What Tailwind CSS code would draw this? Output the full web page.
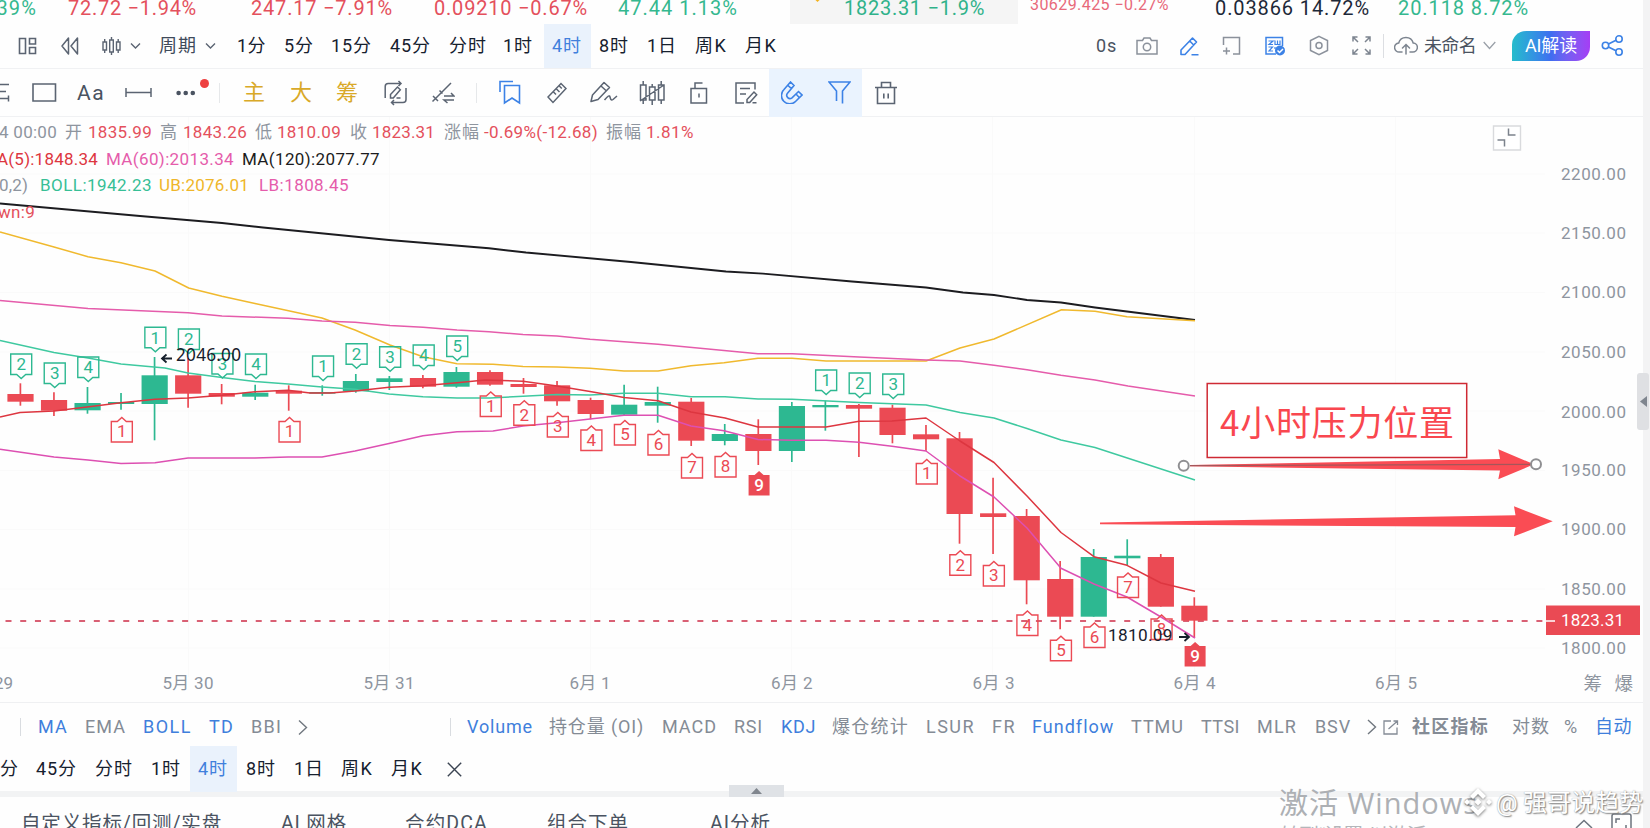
<!DOCTYPE html>
<html lang="zh-CN">
<head>
<meta charset="utf-8">
<title>4时 K线图</title>
<script src="https://cdn.jsdelivr.net/npm/@tailwindcss/browser@4"></script>
</head>
<body class="bg-white overflow-hidden">
<div class="relative flex w-[1650px] h-[828px] overflow-hidden bg-[#fefefe] font-['Roboto','Noto_Sans_CJK_SC',sans-serif] whitespace-nowrap">
<main class="flex w-[1643px] shrink-0 flex-col">

  <!-- ticker strip -->
  <div class="flex h-6 shrink-0 items-start text-[20px] leading-[17px] text-[#e4505c] [&>*]:shrink-0">
    <span class="-ml-2.5 w-[78px] text-[#35b88f]" data-w="47">.39%</span>
    <span class="w-[183px]" data-w="129">72.72 −1.94%</span>
    <span class="w-[183px]" data-w="142">247.17 −7.91%</span>
    <span class="w-[184px]" data-w="154">0.09210 −0.67%</span>
    <span class="w-[172px] text-[#35b88f]" data-w="120">47.44 1.13%</span>
    <div class="h-6 w-[228px] bg-[#f5f5f5] pl-[54px] text-[#2fb28a] relative"><i class="absolute left-[25px] -top-1 size-[5px] rotate-45 bg-[#f3b21c]"></i><span data-w="141">1823.31 −1.9%</span></div>
    <span class="ml-3 w-[185px] text-[16px] leading-[9px] text-[#e8697a]" data-w="139">30629.425 −0.27%</span>
    <span class="w-[183px] text-[#1d2838]" data-w="155">0.03866 14.72%</span>
    <span class="text-[#35b88f]" data-w="131">20.118 8.72%</span>
  </div>

  <!-- period toolbar -->
  <div class="flex h-[45px] shrink-0 items-center border-b border-[#f0f1f3] pb-px pl-[18px] text-[18px] leading-6 text-[#16202e] [&>*]:shrink-0">
    <div class="w-[43px]"><svg class="w-[19px] h-[18px]" viewBox="0 0 19 18" fill="none" stroke="#5b6472" stroke-width="1.6"><path d="M1.5 1.5h6v15h-6zM11.500 1.500h6v5.500h-6zM11.500 10.500h6v6h-6z"/></svg></div>
    <div class="w-[41px]"><svg class="w-[18px] h-5" viewBox="0 0 18 20" fill="none" stroke="#5b6472" stroke-width="1.5" stroke-linejoin="round"><path d="M7.500 2v16L1 10zM16.500 2v16L10 10z"/></svg></div>
    <div class="w-7"><svg class="w-[19px] h-5" viewBox="0 0 19 20" fill="none" stroke="#5b6472" stroke-width="1.4"><path d="M1 6h3.500v8H1zM7.700 4h3.600v12H7.700zM14.500 6H18v8h-3.500zM2.700 3v3m0 8v3M9.500 1v3m0 12v3M16.200 3v3m0 8v3"/></svg></div>
    <div class="w-[29px]"><svg class="w-[11px] h-2" viewBox="0 0 11 8" fill="none" stroke="#5b6472" stroke-width="1.4"><path d="M1 1.500 5.500 6 10 1.500"/></svg></div>
    <span class="w-[46px] text-[#3f4a5a]" data-w="38">周期</span>
    <div class="w-8"><svg class="w-[11px] h-2" viewBox="0 0 11 8" fill="none" stroke="#5b6472" stroke-width="1.4"><path d="M1 1.500 5.500 6 10 1.500"/></svg></div>
    <span class="w-[47px]" data-w="29">1分</span>
    <span class="w-[47px]" data-w="30">5分</span>
    <span class="w-[59px]" data-w="41">15分</span>
    <span class="w-[59px]" data-w="41">45分</span>
    <span class="w-[54px]" data-w="38">分时</span>
    <span class="w-[41px]" data-w="30">1时</span>
    <div class="flex h-[44px] w-[47px] items-center bg-[#eaf2fc] pl-2 text-[#4080dc]"><span data-w="30">4时</span></div>
    <span class="ml-2 w-12" data-w="30">8时</span>
    <span class="w-12" data-w="30">1日</span>
    <span class="w-[50px]" data-w="33">周K</span>
    <span class="w-[351px]" data-w="33">月K</span>
    <span class="w-10 text-[#4a5361]" data-w="21">0s</span>
    <div class="w-11"><svg class="w-[22px] h-[18px]" viewBox="0 0 22 18" fill="none" stroke="#8b919b" stroke-width="1.5"><path d="M1 3.500h5.500L8 1h6l1.500 2.500H21V17H1z"/><circle cx="11" cy="10" r="3.700"/></svg></div>
    <div class="w-[42px]"><svg class="w-[19px] h-5" viewBox="0 0 19 20" fill="none" stroke="#3c82e6" stroke-width="1.600" stroke-linejoin="round"><path d="M1 18.500v-4.500L12.500 2l4 4L5 18.500zM9.700 5l4 4M11.500 18.700H18.500"/></svg></div>
    <div class="w-[43px]"><svg class="w-[19px] h-5" viewBox="0 0 19 20" fill="none" stroke="#8b919b" stroke-width="1.500"><path d="M1.500 9V1.500h16v16.500H11M4.500 11.500v7M1 15h7"/></svg></div>
    <div class="w-11"><svg class="w-[21px] h-5" viewBox="0 0 21 20" fill="none" stroke="#3c82e6" stroke-width="1.500"><path d="M11 18H1V1.500h16.500V10"/><path d="M3.500 5h4.500L4 8.500h4M10 4.500v4h5v-4m-2.500 0v4M3.500 11h4L4 15h4M10 11v2" stroke-width="1.200"/><circle cx="15" cy="14.500" r="5" fill="#3c82e6" stroke="none"/><path d="m12.500 14.500 2 2 3.500-3.500" stroke="#fff"/></svg></div>
    <div class="w-[43px]"><svg class="w-[20px] h-[21px]" viewBox="0 0 20 21" fill="none" stroke="#8b919b" stroke-width="1.500"><path d="M10 1.300 18.500 5.500v10L10 19.700 1.500 15.500v-10z"/><circle cx="10" cy="10.500" r="3"/></svg></div>
    <div class="w-[31px]"><svg class="w-[19px] h-[19px]" viewBox="0 0 19 19" fill="none" stroke="#7d8590" stroke-width="1.500"><path d="M1 5.500V1h4.500M1 1l5 5M13.500 1H18v4.500M18 1l-5 5M1 13.500V18h4.500M1 18l5-5M13.500 18H18v-4.500M18 18l-5-5"/></svg></div>
    <div class="h-6 w-px bg-[#dcdee2]"></div>
    <div class="ml-2.5 w-[30px]"><svg class="w-6 h-[19px]" viewBox="0 0 24 19" fill="none" stroke="#7d8590" stroke-width="1.500" stroke-linecap="round"><path d="M8 16H5.500a4.500 4.500 0 0 1-.8-9 7.500 7.500 0 0 1 14.500 0 4.500 4.500 0 0 1-.7 9H16M12 18V9M8.500 12 12 8.500l3.500 3.500"/></svg></div>
    <span class="w-[59px] text-[#4a5361]" data-w="52">未命名</span>
    <div class="w-[29px]"><svg class="w-[13px] h-[9px]" viewBox="0 0 13 9" fill="none" stroke="#9aa0a8" stroke-width="1.300"><path d="M.7 1 6.500 7.500 12.300 1"/></svg></div>
    <div class="flex h-[30px] w-[78px] items-center justify-center rounded-tl-[14px] rounded-br-[14px] bg-linear-to-r from-[#25bccb] via-[#3f6df0] to-[#a53df5] text-white"><span data-w="52">AI解读</span></div>
    <svg class="ml-[11px] w-[23px] h-[21px]" viewBox="0 0 23 21" fill="none" stroke="#3c82e6" stroke-width="1.600"><circle cx="4.500" cy="10.500" r="3.200"/><circle cx="18" cy="4" r="3.200"/><circle cx="18" cy="17" r="3.200"/><path d="m7.500 9 7.500-3.700M7.500 12l7.500 3.700"/></svg>
  </div>

  <!-- drawing toolbar -->
  <div class="flex h-12 shrink-0 items-center border-b border-[#f0f1f3] text-[21px] leading-6 text-[#d9a928] [&>*]:shrink-0">
    <div class="w-8"><svg class="w-[10px] h-[19px]" viewBox="0 0 10 19" fill="none" stroke="#5b6472" stroke-width="1.500"><path d="M0 1.500h9M0 8.500h6M0 15.500h9M8.500 12.500v6"/></svg></div>
    <div class="w-[45px]"><svg class="w-[25px] h-[19px]" viewBox="0 0 25 19" fill="none" stroke="#5b6472" stroke-width="1.600"><path d="M1 1h22.500v17H1z"/></svg></div>
    <span class="w-12 text-[#4a5361]" data-w="28">Aa</span>
    <div class="w-[51px]"><svg class="w-[27px] h-[10px]" viewBox="0 0 27 10" fill="none" stroke="#5b6472" stroke-width="1.500"><path d="M1 0v9M26 0v9M1 4.500h25"/></svg></div>
    <div class="relative w-[43px]"><svg class="w-5 h-[6px]" viewBox="0 0 20 6" fill="#4a5361"><circle cx="2.600" cy="3" r="2.300"/><circle cx="9.700" cy="3" r="2.300"/><circle cx="16.800" cy="3" r="2.300"/></svg><i class="absolute -top-[11px] left-6 size-[9px] rounded-full bg-[#ee4040]"></i></div>
    <div class="w-6"><div class="h-5 w-px bg-[#e6e8ea]"></div></div>
    <span class="w-[47px] text-[22px]" data-w="23">主</span>
    <span class="w-[46px] text-[22px]" data-w="22">大</span>
    <span class="w-[48px] text-[22px]" data-w="23">筹</span>
    <div class="w-[47px]"><svg class="w-[23px] h-[26px]" viewBox="0 0 23 26" fill="none" stroke="#5b6472" stroke-width="1.500"><path d="M1.200 18V6.500a3 3 0 0 1 3-3H17M14.500 1l2.500 2.500L14.500 6M22 8v11.500a3 3 0 0 1-3 3H7.500M10 20l-2.500 2.500L10 25"/><path d="M6.500 18v-3.500l7-7.500 2.800 2.700L9.300 18zM12.500 18h4"/></svg></div>
    <div class="w-[45px]"><svg class="w-6 h-[22px]" viewBox="0 0 24 22" fill="none" stroke="#5b6472" stroke-width="1.500"><path d="M1.500 19.500 20 1M2 14l5 5M13 14h10l-3-3M23 18H13l3.500 3M8.500 8.500l3 3"/></svg></div>
    <div class="w-[23px]"><div class="h-5 w-px bg-[#e6e8ea]"></div></div>
    <div class="w-12"><svg class="w-[22px] h-[25px]" viewBox="0 0 22 25" fill="none" stroke="#3c82e6" stroke-width="1.600"><path d="M1 12V1.500h13M5.500 5.500H20.500V23L13 18l-7.500 5z"/></svg></div>
    <div class="w-[43px]"><svg class="w-5 h-[22px]" viewBox="0 0 20 22" fill="none" stroke="#5b6472" stroke-width="1.500"><path d="M1 15 14 1.500l5 5L6 20.500zM6.500 10l2.500 2.500M9.500 7l3 3M12.300 4l2.500 2.500"/></svg></div>
    <div class="w-[49px]"><svg class="w-7 h-[23px]" viewBox="0 0 28 23" fill="none" stroke="#5b6472" stroke-width="1.500" stroke-linejoin="round"><path d="M1 20.500 2.500 14 14 1.500l5.500 5L8 18.500zM11 5l5.500 5M14.500 19c3.500-4.500 5-5 5.500-3s1 4 3 2.500L27 15"/></svg></div>
    <div class="w-[51px]"><svg class="w-[26px] h-6" viewBox="0 0 26 24" fill="none" stroke="#5b6472" stroke-width="1.500"><path d="M1.500 4H7v15H1.500zM10.500 6H16v13h-5.500zM19.500 4H25v15h-5.500zM4.200 0v4m0 15v4M13.200 3v3m0 13v5M22.200 0v4m0 15v4M1 20 25 4"/></svg></div>
    <div class="w-[45px]"><svg class="w-[18px] h-[22px]" viewBox="0 0 18 22" fill="none" stroke="#5b6472" stroke-width="1.500"><path d="M1 6.500h15.500V21H1zM5 6V1h7.500M9 11.500v4"/></svg></div>
    <div class="w-[34px]"><svg class="w-[23px] h-[22px]" viewBox="0 0 23 22" fill="none" stroke="#5b6472" stroke-width="1.500"><path d="M20 7.500V1H1v20h8M5 6.500h10M5 12h6M12 20.500v-3L19 10l2.700 2.700L14.700 20.500zM17.500 20.700h4"/></svg></div>
    <div class="flex h-12 w-[93px] items-center gap-[25px] bg-[#eaf3fe] pl-3">
      <svg class="w-[22px] h-[23px]" viewBox="0 0 22 23" fill="none" stroke="#3c82e6" stroke-width="1.600"><path d="M9.500 1 3 8.500a8 8 0 0 0 11.500 12L21 14l-3.500-3.500-6.500 6.300a3.200 3.200 0 0 1-4.500-4.500L13 4.500zM7 4.500l3.500 3.200M15 13l3.200 3.500"/></svg>
      <svg class="w-[23px] h-[23px]" viewBox="0 0 23 23" fill="none" stroke="#3c82e6" stroke-width="1.600"><path d="M8.500 20V10L1 1h21l-7.500 9v12.500"/></svg>
    </div>
    <svg class="ml-3 w-6 h-6" viewBox="0 0 24 24" fill="none" stroke="#5b6472" stroke-width="1.600"><path d="M1 6.500h22M7.500 6V1.500h9V6M3.500 7v15.500h17V7M9.800 12.500v5M14.200 12.500v5"/></svg>
  </div>

  <!-- chart -->
  <section class="relative h-[586px] w-[1643px] shrink-0 border-b border-[#eff0f2]">
    <svg id="chart" class="absolute inset-0 font-['Roboto','Noto_Sans_CJK_SC',sans-serif]" width="1643" height="586" viewBox="0 117 1643 586" fill="none">
      <g stroke="#fafafa"><path d="M188.500 117v560M389.500 117v560M590.500 117v560M791.500 117v560M992.500 117v560M1194.500 117v560M1395.500 117v560M0 174h1545M0 233h1545M0 292.500h1545M0 352h1545M0 411h1545M0 470.500h1545M0 529.500h1545M0 589h1545M0 648h1545"/></g>
      <path d="M5.500 621H1546" stroke="#d96074" stroke-width="1.800" stroke-dasharray="6 8.720"/>
      <g id="candles"></g>
      <g stroke-width="1.500" stroke-linejoin="round">
        <polyline stroke="#1c1c20" stroke-width="1.900" points="0,203.500 140,216 222,223 263,227.500 389,240 489,248.300 526,252.500 631,262 726,271.500 763,273.600 852,281.500 926,287.500 963,292.500 994,295 1027,300 1061,302.500 1095,307.500 1195,320"/>
        <polyline stroke="#f0b92e" points="0,232 54,247 88,256.700 121,262.700 155,271 188.700,288 222,296.300 255,303.500 322,318 355,330 390,345 423,356.700 457,363.700 493,364.200 523,366.500 557,367 590,368.300 624,371 658,371 691,365.700 724,362.700 758,358.300 792,358.300 826,361 926,361 960,348 994,339 1061.500,309.700 1095,311.300 1127,316.700 1195,320.700"/>
        <polyline stroke="#e55cab" points="0,300.500 88,308.500 188,312.700 222,316 288,318.300 322,321 355,322.300 390,325.500 423,327.300 457,330 489,331.700 523,334.500 557,336 590,339.300 658,344.300 724,350.500 758,353.700 792,353.700 859,357 926,360 960,361 994,365.300 1027,369.700 1061,375.300 1095,380 1128,386 1195,396"/>
        <polyline stroke="#3fc9a0" points="0,340.500 54,352.500 88,358 121,364 165,368 188,373 222,377.500 255,381.500 288,384 322,387 355,389.300 389,394 423,396.700 457,398 490,398 523,396.300 557,394.500 590,395 624,393.300 658,393.300 691,396.700 725,396.700 758,399 792,399.300 859,402.500 926,405 960,412.500 994,418 1027,428.500 1061,440 1095,447.500 1195,480"/>
        <polyline stroke="#dd3640" points="0,417 20,412.500 54,411 87,407 121,402.700 155,399.300 188,398 222,395.300 255,391.700 288,390.300 310,393 330,393 355,391 389,387.300 423,385.700 457,382.700 485,380 523,381.300 557,386 590,391.500 624,397.500 658,400.700 691,412 725,418 758,427 826,427 859,421.300 892,421 926,418 960,441 994,462.500 1027,496 1061,532.500 1094,556.700 1127,565.300 1161,583 1195,591.300"/>
        <polyline stroke="#dd50b2" points="0,449.300 54,457 88,460 121,463.500 155,462.700 188,458 255,458 288,457 322,457 355,451 389,443.500 423,435.700 457,431.700 493,431 523,426 557,422.700 590,419 624,415.300 658,415.300 691,426 724,430.700 758,439.500 792,440.300 826,440.300 859,442.300 892,446.300 926,451 960,476 994,497 1027,528 1061,568.300 1094,584 1127,597 1161,617 1195,638"/>
      </g>
      <g id="marks" font-size="17" text-anchor="middle"></g>
      <g fill="#17202c" font-size="17.200">
        <text x="176" y="360.700" textLength="65" font-family="Noto Sans">2046.00</text>
        <text x="1108" y="640.500" textLength="64.500">1810.09</text>
      </g>
      <path d="M172 358.500h-10m4.500-4-4.500 4 4.500 4M1179 637h10m-4.500-4 4.500 4-4.500 4" stroke="#17202c" stroke-width="1.800"/>
      <!-- annotations -->
      <g fill="#fa4c54">
        <path d="M1190 465 1500 459 1498.300 449.300 1534 464.300 1498.300 479.300 1500 470.500 1190 466.300z"/>
        <path d="M1100 522.500 1515.500 515.300 1514 506.300 1552.700 521.300 1514 536.300 1515.500 527 1100 524.300z"/>
      </g>
      <path d="M1190 465.700 1531 464.300" stroke="#a5565a" stroke-width="1.300"/>
      <g stroke="#8f8f92" stroke-width="2" fill="#fff"><circle cx="1183.700" cy="465.700" r="5"/><circle cx="1536" cy="464.300" r="5"/></g>
      <rect x="1207.200" y="383.500" width="259.500" height="74" fill="#fff" stroke="#cf2a34" stroke-width="1.500"/>
      <text x="1220" y="436" font-size="35" fill="#f9474f" textLength="234" font-family="Noto Sans CJK SC">4小时压力位置</text>
      <!-- axes -->
      <g fill="#8e959f" font-size="17">
        <text x="1561" y="179.700" textLength="65">2200.00</text><text x="1561" y="239" textLength="65">2150.00</text><text x="1561" y="298.300" textLength="65">2100.00</text><text x="1561" y="357.600" textLength="65">2050.00</text><text x="1561" y="417.500" textLength="65">2000.00</text><text x="1561" y="476" textLength="65">1950.00</text><text x="1561" y="535.300" textLength="65">1900.00</text><text x="1561" y="594.700" textLength="65">1850.00</text><text x="1561" y="654.300" textLength="65">1800.00</text>
        <text x="-6" y="689.300">29</text><text x="162.500" y="689.300" textLength="51">5月 30</text><text x="363.500" y="689.300" textLength="51">5月 31</text><text x="569.500" y="689.300" textLength="41">6月 1</text><text x="771" y="689.300" textLength="41.500">6月 2</text><text x="972.500" y="689.300" textLength="42">6月 3</text><text x="1173.500" y="689.300" textLength="42">6月 4</text><text x="1375" y="689.300" textLength="42">6月 5</text>
        <text x="1583.500" y="690" font-size="18.500">筹</text><text x="1614.500" y="690" font-size="18.500">爆</text>
      </g>
      <path d="M1546 605.500h94v29.500h-94z" fill="#ea4a54"/><path d="M1546 621h9" stroke="#fff" stroke-width="1.500"/>
      <text x="1561" y="626.200" font-size="17" fill="#fff" textLength="63">1823.31</text>
      <path d="M1493.500 126h27v24h-27z" fill="#fff" stroke="#d9dadd" stroke-width="1.400"/>
      <path d="M1508.500 128.500v6.500h7M1497.500 140h7v6.500" stroke="#7c828c" stroke-width="1.500"/>
    </svg>
    <div class="absolute left-0 top-[2px] flex flex-col text-[17px] leading-[26.6px] text-[#e4505c]">
      <div class="flex [&>*]:shrink-0">
        <span class="-ml-px w-[66px] text-[#8e959f]" data-w="58">4 00:00</span>
        <span class="w-[23px] text-[#8e959f]" data-w="18">开</span>
        <span class="w-[72px]" data-w="64">1835.99</span>
        <span class="w-[23px] text-[#8e959f]" data-w="18">高</span>
        <span class="w-[72px]" data-w="64">1843.26</span>
        <span class="w-[22px] text-[#8e959f]" data-w="18">低</span>
        <span class="w-[73px]" data-w="64">1810.09</span>
        <span class="w-[22px] text-[#8e959f]" data-w="18">收</span>
        <span class="w-[72px]" data-w="63">1823.31</span>
        <span class="w-10 text-[#8e959f]" data-w="36">涨幅</span>
        <span class="w-[122px]" data-w="114">-0.69%(-12.68)</span>
        <span class="w-10 text-[#8e959f]" data-w="36">振幅</span>
        <span data-w="48">1.81%</span>
      </div>
      <div class="flex [&>*]:shrink-0">
        <span class="-ml-[3px] w-[109px] text-[#dd3640]" data-w="101">A(5):1848.34</span>
        <span class="w-[136px] text-[#e55cab]" data-w="128">MA(60):2013.34</span>
        <span class="text-[#1c1c20]" data-w="138">MA(120):2077.77</span>
      </div>
      <div class="flex [&>*]:shrink-0">
        <span class="-ml-px w-[41px] text-[#8e959f]" data-w="29">0,2)</span>
        <span class="w-[119px] text-[#37bf96]" data-w="112">BOLL:1942.23</span>
        <span class="w-[100px] text-[#efb62a]" data-w="90">UB:2076.01</span>
        <span class="text-[#e55cab]" data-w="90">LB:1808.45</span>
      </div>
      <span class="-ml-[2px] self-start" data-w="37">wn:9</span>
    </div>
  </section>

  <!-- indicator row -->
  <div class="flex h-[48px] shrink-0 items-center text-[18px] leading-6 text-[#848b95] [&>*]:shrink-0">
    <div class="ml-5 h-[18px] w-px bg-[#d9dce0]"></div>
    <span class="ml-[17px] w-[47px] text-[#3f7fdc]" data-w="30">MA</span>
    <span class="w-[58px]" data-w="41">EMA</span>
    <span class="w-[66px] text-[#3f7fdc]" data-w="49">BOLL</span>
    <span class="w-[42px] text-[#3f7fdc]" data-w="25">TD</span>
    <span class="w-[47px]" data-w="31">BBI</span>
    <div class="w-[152px]"><svg class="w-[10px] h-[17px]" viewBox="0 0 10 17" fill="none" stroke="#70777f" stroke-width="1.400"><path d="M1 1.500 8.500 8.500 1 15.500"/></svg></div>
    <div class="h-[18px] w-px bg-[#d9dce0]"></div>
    <span class="ml-4 w-[82px] text-[#3f7fdc]" data-w="66">Volume</span>
    <span class="w-[113px]" data-w="95">持仓量 (OI)</span>
    <span class="w-[72px]" data-w="55">MACD</span>
    <span class="w-[47px]" data-w="29">RSI</span>
    <span class="w-[51px] text-[#3f7fdc]" data-w="35">KDJ</span>
    <span class="w-[94px]" data-w="77">爆仓统计</span>
    <span class="w-[66px]" data-w="49">LSUR</span>
    <span class="w-[40px]" data-w="24">FR</span>
    <span class="w-[99px] text-[#3f7fdc]" data-w="82">Fundflow</span>
    <span class="w-[70px]" data-w="53">TTMU</span>
    <span class="w-[56px]" data-w="39">TTSI</span>
    <span class="w-[58px]" data-w="40">MLR</span>
    <span class="w-[52px]" data-w="36">BSV</span>
    <div class="w-[16px]"><svg class="w-[10px] h-[16px]" viewBox="0 0 10 16" fill="none" stroke="#70777f" stroke-width="1.400"><path d="M1 1 8.500 8 1 15"/></svg></div>
    <div class="w-[29px]"><svg class="w-4 h-[15px]" viewBox="0 0 16 15" fill="none" stroke="#848b95" stroke-width="1.300"><path d="M8 1H1v13h13V7.500M5.500 9 14.500 1M10.500 1h4v4"/></svg></div>
    <span class="w-[100px] font-bold" data-w="77">社区指标</span>
    <span class="w-[52px]" data-w="38">对数</span>
    <span class="w-[31px]" data-w="15">%</span>
    <span class="text-[#3f7fdc]" data-w="37">自动</span>
  </div>

  <!-- pinned periods -->
  <div class="mb-1 flex h-[36px] shrink-0 items-center text-[18px] leading-6 text-[#16202e] [&>*]:shrink-0">
    <span class="w-[36px]" data-w="18">分</span>
    <span class="w-[59px]" data-w="41">45分</span>
    <span class="w-[56px]" data-w="38">分时</span>
    <span class="w-[39px]" data-w="30">1时</span>
    <div class="relative z-10 flex h-[46px] w-[47px] items-center bg-[#eaf2fc] pl-2 text-[#4080dc]"><span data-w="30">4时</span></div>
    <span class="ml-[9px] w-12" data-w="30">8时</span>
    <span class="w-[47px]" data-w="30">1日</span>
    <span class="w-[50px]" data-w="33">周K</span>
    <span class="w-[56px]" data-w="33">月K</span>
    <svg class="w-[15px] h-[15px]" viewBox="0 0 15 15" fill="none" stroke="#3b4452" stroke-width="1.400"><path d="m.8.800 13.400 13.400M14.200.8.800 14.200"/></svg>
  </div>

  <div class="relative h-[6px] shrink-0 bg-[#f2f3f4]">
    <div class="absolute left-[729px] -top-[6px] flex h-3 w-[55px] items-center justify-center bg-[#dfe2e6]"><svg class="w-[11px] h-[6px]" viewBox="0 0 11 6" fill="#80868e"><path d="M5.500 0 11 6H0z"/></svg></div>
  </div>

  <!-- bottom tabs -->
  <div class="flex h-[54px] shrink-0 items-center pl-[21px] text-[19.500px] leading-6 text-[#4a5361] [&>*]:shrink-0">
    <span class="w-[260px]" data-w="201">自定义指标/回测/实盘</span>
    <span class="w-[124px]" data-w="66">AI 网格</span>
    <span class="w-[142px]" data-w="83">合约DCA</span>
    <span class="w-[163px]" data-w="82">组合下单</span>
    <span data-w="61">AI分析</span>
  </div>
</main>

<!-- right gutter -->
<aside class="relative h-full w-[7px] shrink-0 bg-[#f3f3f4]">
  <div class="absolute -left-[6px] top-[373px] flex h-[57px] w-3 items-center justify-center rounded-[3px] bg-[#dfe0e3]"><svg class="w-[7px] h-[11px]" viewBox="0 0 7 11" fill="#7f858e"><path d="M0 5.500 7 0v11z"/></svg></div>
</aside>

<!-- overlays -->
<span class="absolute left-[1279px] top-[783px] text-[29px] leading-10 text-[#adb0b4] font-['Open_Sans','Noto_Sans_CJK_SC',sans-serif]" data-w="199">激活 Windows</span>
<span class="absolute left-[1280px] top-[824px] text-[20px] leading-6 text-[#b4b6ba]" data-w="244">转到“设置”以激活 Windows。</span>
<svg class="absolute left-[1575px] top-[812px]" width="60" height="16" viewBox="0 0 60 16" fill="none" stroke="#6d747e" stroke-width="1.500"><path d="M1 16 9 8.500 17 16M37 16V4a2 2 0 0 1 2-2h15a2 2 0 0 1 2 2v12M41 11V7h4M51 13v3"/></svg>
<svg class="absolute left-[1463px] top-[787px] drop-shadow-[0_1px_1.5px_rgba(0,0,0,0.55)]" width="30" height="30" viewBox="0 0 30 30" fill="#fff"><path d="m15 1 8 8-3 3-5-5-5 5-3-3zM15 29l-8-8 3-3 5 5 5-5 3 3zM4 12l3 3-3 3-3-3zM26 12l3 3-3 3-3-3zM15 11.500l3.500 3.500-3.500 3.500-3.500-3.500z"/></svg>
<div class="absolute left-[1496px] top-[788px] flex text-[24px] leading-[30px] text-white [text-shadow:0_0_1px_#999,1px_1px_1.5px_#777]"><span class="w-[27px]" data-w="22">@</span><span data-w="120">强哥说趋势</span></div>
</div>

<script>
// index, colour, high, body top, body bottom, low
const UP = '#2db891', DOWN = '#eb4a54', STEP = 33.54, X0 = 20.4;
const candles = [
 [0,383.3,394,401.7,405.7],[0,392.3,400,410.7,416],[1,387,403,410.3,413.7],[1,393,402,404,409.7],[1,357,375.3,404,440.3],[0,358,375.3,393.7,407.7],
 [0,384,393,396.7,404.3],[1,384.7,392.7,396.7,400],[0,385.3,390.7,393.7,410.7],[1,385.3,392,393.7,395.7],[1,374,381,391.3,392.7],[1,376,378.3,382,390],
 [0,375,378,386.7,388.3],[1,367,372,386.7,387.7],[0,370.3,372,384.7,385.7],[0,378,384,387,393.7],[0,381,385.3,401.3,405.7],[0,397.7,400,414,419.3],
 [1,384.7,404.7,414.7,416],[1,386.7,402,405.7,422.7],[0,398,401.7,440.7,446],[1,424,434,441,445.3],[0,419.3,434,451,465],[1,402,406,451,462],
 [1,400.7,405,407.3,430.7],[0,404,405,408.7,457],[0,404.7,407.7,435,443.3],[0,425,434.3,439.3,450.7],[0,432,438.3,514,543.7],[0,477.7,513.3,517,554],
 [0,509,516,580.3,604.3],[0,561,579,616.7,629.3],[1,549,557,616.7,616.7],[1,539.3,555.7,558.3,565.3],[0,554,557,606.7,606.7],[0,597.3,605.7,620.7,637.7]];
document.getElementById('candles').innerHTML = candles.map(([u,h,t,b,l],i)=>{
  const x = X0+STEP*i, c = u?UP:DOWN;
  return `<path d="M${x} ${h}V${l}" stroke="${c}" stroke-width="1.7"/><rect x="${x-13}" y="${t}" width="26.200" height="${b-t}" fill="${c}"/>`;
}).join('');
// candle index, count, box top
const ups = [[0,2,354],[1,3,363],[2,4,357],[4,1,327.3],[5,2,329],[6,3,353.5],[7,4,354],[9,1,356],[10,2,343.7],[11,3,346.7],[12,4,345],[13,5,336],[24,1,370],[25,2,373],[26,3,374]];
// candle index, count, box bottom
const downs = [[3,1,442],[8,1,442],[14,1,416.5],[15,2,425.3],[16,3,437],[17,4,450.5],[18,5,445],[19,6,455],[20,7,478],[21,8,477],[22,9,495.5],[27,1,484],[28,2,575.3],[29,3,586],[30,4,635.5],[31,5,660.7],[32,6,647.5],[33,7,597.5],[34,8,639.5],[35,9,666.5]];
document.getElementById('marks').innerHTML = ups.map(([i,n,t])=>{
  const x = X0+STEP*i+.8;
  return `<path d="M${x-10.500} ${t}h21v20.500h-6l-4.500 4-4.500 -4h-6z" stroke="${UP}" stroke-width="1.4"/><text x="${x}" y="${t+16.300}" fill="${UP}">${n}</text>`;
}).join('') + downs.map(([i,n,b])=>{
  const x = X0+STEP*i+.8, f = n===9;
  return `<path d="M${x-10.500} ${b}h21v-20.500h-6l-4.500 -4-4.500 4h-6z" stroke="${f?'none':DOWN}" fill="${f?DOWN:'none'}" stroke-width="1.4"/><text x="${x}" y="${b-4.700}" fill="${f?'#fff':DOWN}" font-weight="${f?500:400}">${n}</text>`;
}).join('');
// fit label tracking to its data-w advance width, again whenever styles or fonts settle
const labels = [...document.querySelectorAll('[data-w]')];
function fit() {
  labels.forEach(el => { el.style.letterSpacing = '0px'; });
  const widths = labels.map(el => {
    const r = document.createRange(); r.selectNodeContents(el);
    return r.getBoundingClientRect().width;
  });
  labels.forEach((el, i) => {
    const d = (+el.dataset.w - widths[i]) / el.textContent.length;
    el.style.letterSpacing = Math.max(-1.5, Math.min(1.5, d)).toFixed(3) + 'px';
  });
}
fit();
new ResizeObserver(fit).observe(document.querySelector('main'));
window.addEventListener('load', () => { fit(); requestAnimationFrame(fit); setTimeout(fit, 60); });
document.fonts.ready.then(fit);
document.fonts.addEventListener('loadingdone', fit);
</script>
</body>
</html>
